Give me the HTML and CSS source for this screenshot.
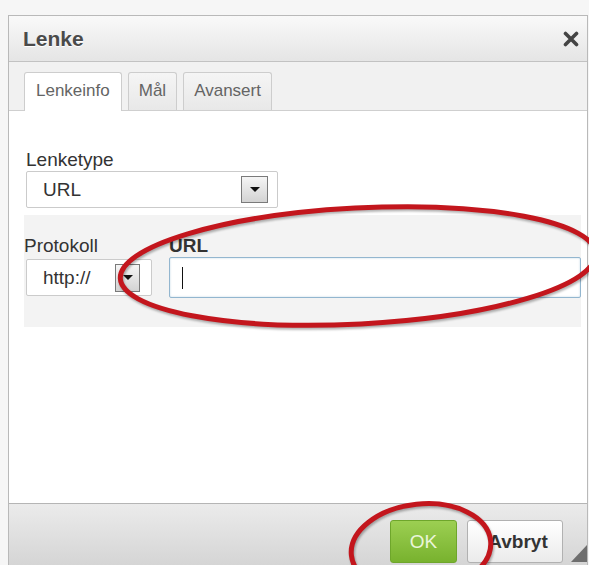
FILE: index.html
```html
<!DOCTYPE html>
<html lang="no">
<head>
<meta charset="utf-8">
<title>Lenke</title>
<link rel="stylesheet" href="styles.css">
</head>
<body>
<div class="dialog">
  <div class="dialog-title">
    <span class="title-text">Lenke</span>
    <span class="close" aria-label="Lukk">
      <svg viewBox="0 0 16 16" width="16" height="16"><path d="M2.5 2.5 L13.5 13.5 M13.5 2.5 L2.5 13.5" stroke="#444" stroke-width="3.6" stroke-linecap="round" fill="none"/></svg>
    </span>
  </div>

  <div class="tabs">
    <span class="tab active">Lenkeinfo</span>
    <span class="tab">Mål</span>
    <span class="tab">Avansert</span>
  </div>

  <div class="dialog-body">
    <div class="type-field">
      <label class="label">Lenketype</label>
      <div class="select select-type">
        <span class="select-value">URL</span>
        <span class="select-btn"><i class="caret-down"></i></span>
      </div>
    </div>

    <div class="url-panel">
      <label class="label">Protokoll</label>
      <label class="label label-bold">URL</label>
      <div class="select select-proto">
        <span class="select-value">http://</span>
        <span class="select-btn"><i class="caret-down"></i></span>
      </div>
      <div class="text-input"><span class="text-cursor"></span></div>
    </div>
  </div>

  <div class="dialog-footer">
    <span class="btn btn-ok">OK</span>
    <span class="btn btn-cancel">Avbryt</span>
    <span class="resize-grip"></span>
  </div>
</div>

<svg class="marks" viewBox="0 0 589 565" width="589" height="565">
  <ellipse cx="358" cy="266" rx="238" ry="58" transform="rotate(-3 358 266)" fill="none" stroke="#c3161d" stroke-width="5"/>
  <ellipse cx="421" cy="548" rx="70" ry="44" transform="rotate(-6 421 548)" fill="none" stroke="#c3161d" stroke-width="5"/>
</svg>
</body>
</html>
```

FILE: styles.css
```css
html, body {
  margin: 0;
}

body {
  position: relative;
  width: 589px;
  height: 565px;
  overflow: hidden;
  box-sizing: border-box;
  padding: 15px 0 0 8px;
  background: #f6f6f6;
  font-family: "Liberation Sans", Arial, sans-serif;
  color: #333;
}

/* dialog frame */
.dialog {
  position: relative;
  width: 578px;
  border: 1px solid #b9b9b9;
  border-bottom: none;
  background: #fff;
}

.dialog-title {
  height: 45px;
  display: flex;
  align-items: center;
  justify-content: space-between;
  padding: 0 8px 0 14px;
  background: linear-gradient(#f9f9f9, #e5e5e5);
  border-bottom: 1px solid #c2c2c2;
}

.title-text {
  font-size: 21px;
  font-weight: bold;
  color: #4a4a4a;
  text-shadow: 0 1px 0 #fff;
}

.close svg {
  display: block;
}

/* tab strip */
.tabs {
  height: 49px;
  box-sizing: border-box;
  display: flex;
  align-items: flex-end;
  gap: 6px;
  padding: 10px 0 0 15px;
  background: #f1f1f1;
  border-bottom: 1px solid #cfcfcf;
}

.tab {
  height: 38px;
  box-sizing: border-box;
  display: flex;
  align-items: center;
  padding: 0 10px 2px;
  font-size: 17px;
  color: #646464;
  background: linear-gradient(#f5f5f5, #e8e8e8);
  border: 1px solid #cdcdcd;
  border-bottom: none;
  border-radius: 3px 3px 0 0;
}

.tab.active {
  height: 39px;
  margin-bottom: -1px;
  padding: 0 11px 3px;
  background: #fff;
}

/* body */
.dialog-body {
  height: 392px;
  box-sizing: border-box;
  padding: 38px 6px 0 15px;
  background: #fff;
}

.label {
  display: block;
  font-size: 19px;
  line-height: 22px;
  color: #333;
}

.label-bold {
  font-weight: bold;
}

.type-field {
  padding-left: 2px;
}

.select {
  height: 37px;
  box-sizing: border-box;
  display: flex;
  align-items: center;
  background: #fff;
  border: 1px solid #cbcbcb;
  border-radius: 2px;
  font-size: 19px;
  color: #333;
}

.select-type {
  width: 252px;
  padding: 0 9px 0 16px;
}

.select-proto {
  width: 126px;
  padding: 0 11px 0 16px;
}

.select-btn {
  margin-left: auto;
  width: 27px;
  height: 27px;
  box-sizing: border-box;
  display: flex;
  align-items: center;
  justify-content: center;
  border: 1px solid #7a7a7a;
  background: linear-gradient(#f5f5f5, #d3d3d3);
}

.select-proto .select-btn {
  width: 25px;
  height: 28px;
}

.caret-down {
  width: 0;
  height: 0;
  border-top: 5px solid #111;
  border-left: 5px solid transparent;
  border-right: 5px solid transparent;
}

.url-panel {
  margin-top: 7px;
  height: 112px;
  box-sizing: border-box;
  padding: 20px 0 0 0;
  background: #f3f3f3;
  display: grid;
  grid-template-columns: 128px 412px;
  grid-template-rows: 22px 41px;
  column-gap: 17px;
  align-items: center;
}

.url-panel .select-proto {
  margin-left: 2px;
}

.text-input {
  height: 41px;
  box-sizing: border-box;
  display: flex;
  align-items: center;
  padding-left: 12px;
  background: #fff;
  border: 1px solid #93b6cf;
  border-radius: 2px;
  box-shadow: inset 0 0 2px rgba(120, 170, 200, 0.5);
}

.text-cursor {
  width: 1px;
  height: 22px;
  background: #111;
}

/* footer */
.dialog-footer {
  position: relative;
  height: 62px;
  box-sizing: border-box;
  display: flex;
  justify-content: flex-end;
  align-items: flex-start;
  gap: 10px;
  padding: 16px 24px 0 0;
  background: linear-gradient(#ebebeb, #d5d5d5);
  border-top: 1px solid #b5b5b5;
}

.btn {
  height: 43px;
  box-sizing: border-box;
  display: flex;
  align-items: center;
  justify-content: center;
  font-size: 19px;
  border-radius: 3px;
}

.btn-ok {
  width: 67px;
  color: #eaf5da;
  background: linear-gradient(#9ccf52, #78b22e);
  border: 1px solid #6ea62b;
}

.btn-cancel {
  width: 96px;
  padding-left: 6px;
  font-weight: bold;
  color: #333;
  background: linear-gradient(#ffffff, #ebebeb);
  border: 1px solid #b1b1b1;
}

.resize-grip {
  position: absolute;
  right: 0;
  bottom: 3px;
  width: 16px;
  height: 17px;
  background: #6e6e6e;
  clip-path: polygon(100% 0, 100% 100%, 0 100%);
}

/* red annotation rings drawn over the dialog */
.marks {
  position: absolute;
  top: 0;
  left: 0;
  pointer-events: none;
  filter: drop-shadow(1px 2px 1px rgba(0, 0, 0, 0.3));
}
```
